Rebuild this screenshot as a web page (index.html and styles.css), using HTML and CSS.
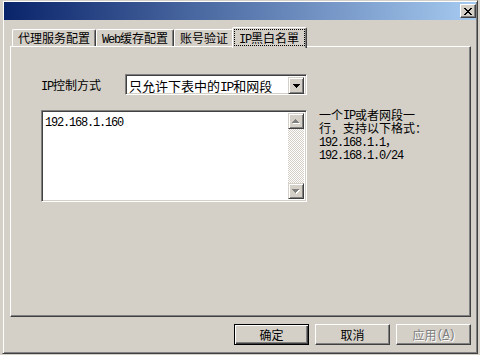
FILE: index.html
```html
<!DOCTYPE html>
<html lang="zh-CN">
<head>
<meta charset="utf-8">
<title>IP黑白名單</title>
<link rel="stylesheet" href="styles.css">
</head>
<body>
<div class="win">
  <div class="title">
    <div class="close">
      <svg width="8" height="7" viewBox="0 0 8 7" shape-rendering="crispEdges"><path fill="#000" d="M0 0h2v1H0zM6 0h2v1H6zM1 1h2v1H1zM5 1h2v1H5zM2 2h4v1H2zM3 3h2v1H3zM2 4h4v1H2zM1 5h2v1H1zM5 5h2v1H5zM0 6h2v1H0zM6 6h2v1H6z"/></svg>
    </div>
  </div>
  <div class="content">
    <div class="tabs">
      <div class="tab">代理服务配置</div>
      <div class="tab"><span class="a">Web</span>缓存配置</div>
      <div class="tab">账号验证</div>
      <div class="tab sel"><span class="focus"><span class="a">IP</span>黑白名單</span></div>
    </div>
    <div class="panel">
      <div class="row">
        <div class="lbl"><span class="a">IP</span>控制方式</div>
        <div class="select">
          <div class="val">只允许下表中的<span class="a">IP</span>和网段</div>
          <div class="drop">
            <svg width="7" height="4" viewBox="0 0 7 4" shape-rendering="crispEdges"><path fill="#000" d="M0 0h7v1H0zM1 1h5v1H1zM2 2h3v1H2zM3 3h1v1H3z"/></svg>
          </div>
        </div>
      </div>
      <div class="row2">
        <div class="ta">
          <div class="txt"><span class="a">192.168.1.160</span></div>
          <div class="sb">
            <div class="sbtn">
              <svg width="8" height="5" viewBox="0 0 8 5" shape-rendering="crispEdges"><path fill="#fff" d="M4 1h1v1H4zM3 2h3v1H3zM2 3h5v1H2zM1 4h7v1H1z"/><path fill="#808080" d="M3 0h1v1H3zM2 1h3v1H2zM1 2h5v1H1zM0 3h7v1H0z"/></svg>
            </div>
            <div class="sbtn">
              <svg width="8" height="5" viewBox="0 0 8 5" shape-rendering="crispEdges"><path fill="#fff" d="M1 1h7v1H1zM2 2h5v1H2zM3 3h3v1H3zM4 4h1v1H4z"/><path fill="#808080" d="M0 0h7v1H0zM1 1h5v1H1zM2 2h3v1H2zM3 3h1v1H3z"/></svg>
            </div>
          </div>
        </div>
        <div class="note">
          <div class="ln first">一个<span class="a up">IP</span>或者网段一</div>
          <div class="ln">行，支持以下格式：</div>
          <div class="ln"><span class="a">192.168.1.1</span>，</div>
          <div class="ln"><span class="a">192.168.1.0/24</span></div>
        </div>
      </div>
    </div>
    <div class="btns">
      <div class="btn def">确定</div>
      <div class="btn">取消</div>
      <div class="btn dis">应用<span class="a">(<u>A</u>)</span></div>
    </div>
  </div>
</div>
</body>
</html>
```
FILE: styles.css
```css
* { box-sizing: border-box; }
html, body { margin: 0; padding: 0; }
body {
  width: 480px;
  height: 355px;
  overflow: hidden;
  background: #d4d0c8;
  font-family: "Noto Sans CJK SC", sans-serif;
  font-size: 12px;
  color: #000;
}
.a {
  font-family: "Liberation Mono", "Noto Sans CJK SC", monospace;
  letter-spacing: -1.2px;
}
.win {
  margin-left: 2px;
  width: 476px;
  height: 354px;
  border: 1px solid;
  border-color: #d4d0c8 #404040 #404040 #d4d0c8;
  box-shadow: inset 1px 1px #fff, inset -1px -1px #808080;
  padding: 1px;
  display: flex;
  flex-direction: column;
}
.title {
  height: 18px;
  flex: none;
  background: linear-gradient(to right, #0a246a, #a6caf0);
  display: flex;
  justify-content: flex-end;
  padding-top: 2px;
}
.close {
  width: 16px;
  height: 14px;
  background: #d4d0c8;
  border: 1px solid;
  border-color: #fff #404040 #404040 #fff;
  box-shadow: inset -1px -1px #808080;
  display: flex;
  align-items: center;
  justify-content: center;
}
.close svg { display: block; }
.content {
  flex: 1;
  padding: 0 5px 0 6px;
  display: flex;
  flex-direction: column;
}
.tabs {
  display: flex;
  align-items: flex-end;
  height: 19px;
  margin-top: 7px;
  padding-left: 2px;
}
.tab {
  height: 17px;
  padding: 0 5px;
  border: 1px solid;
  border-bottom: none;
  border-color: #fff #404040 transparent #fff;
  border-radius: 2px 2px 0 0;
  box-shadow: inset -1px 0 #808080;
  line-height: 16px;
  white-space: nowrap;
}
.tab.sel {
  height: 21px;
  margin: 0 -2px -2px;
  padding: 1px 1px 0;
  position: relative;
  z-index: 1;
  background: #d4d0c8;
}
.focus {
  display: block;
  height: 17px;
  padding: 0 5px 0 4px;
  border: 1px dotted #000;
  line-height: 15px;
}
.panel {
  height: 271px;
  border: 1px solid;
  border-color: #fff #404040 #404040 #fff;
  box-shadow: inset -1px -1px #808080;
  padding: 27px 0 0 30px;
}
.row {
  display: flex;
  align-items: center;
  height: 21px;
}
.lbl { width: 84px; }
.select {
  width: 182px;
  height: 21px;
  background: #fff;
  border: 1px solid;
  border-color: #808080 #fff #fff #808080;
  box-shadow: inset 1px 1px #404040, inset -1px -1px #d4d0c8;
  padding: 2px;
  display: flex;
}
.val {
  flex: 1;
  font-size: 13px;
  line-height: 17px;
  padding-left: 1px;
  white-space: nowrap;
}
.drop, .sbtn {
  width: 16px;
  height: 17px;
  background: #d4d0c8;
  border: 1px solid;
  border-color: #d4d0c8 #404040 #404040 #d4d0c8;
  box-shadow: inset 1px 1px #fff, inset -1px -1px #808080;
  display: flex;
  align-items: center;
  justify-content: center;
}
.drop svg, .sbtn svg { display: block; }
.row2 {
  display: flex;
  margin-top: 15px;
}
.ta {
  width: 266px;
  height: 92px;
  background: #fff;
  border: 1px solid;
  border-color: #808080 #fff #fff #808080;
  box-shadow: inset 1px 1px #404040, inset -1px -1px #d4d0c8;
  padding: 2px;
  display: flex;
}
.txt {
  flex: 1;
  padding: 1px 0 0 1px;
  line-height: 14px;
}
.sb {
  width: 16px;
  display: flex;
  flex-direction: column;
  justify-content: space-between;
  background: repeating-conic-gradient(#d4d0c8 0 25%, #fff 0 50%) 0 0 / 2px 2px;
}
.sbtn { height: 16px; }
.note {
  margin-left: 12px;
  margin-top: -1px;
  white-space: nowrap;
  font-family: "Liberation Serif", "Noto Sans CJK SC", sans-serif;
}
.ln {
  height: 13px;
  line-height: 13px;
}
.ln.first {
  height: 14px;
  line-height: 14px;
}
.a.up { vertical-align: 1px; }
.btns {
  display: flex;
  justify-content: flex-end;
  gap: 6px;
  margin-top: 7px;
}
.btn {
  width: 75px;
  height: 21px;
  border: 1px solid;
  border-color: #fff #404040 #404040 #fff;
  box-shadow: inset -1px -1px #808080;
  display: flex;
  align-items: center;
  justify-content: center;
  line-height: 14px;
}
.btn.def {
  border-color: #000;
  box-shadow: inset 1px 1px #fff, inset -1px -1px #404040, inset -2px -2px #808080;
}
.btn.dis {
  color: #808080;
  text-shadow: 1px 1px #fff;
}
```
